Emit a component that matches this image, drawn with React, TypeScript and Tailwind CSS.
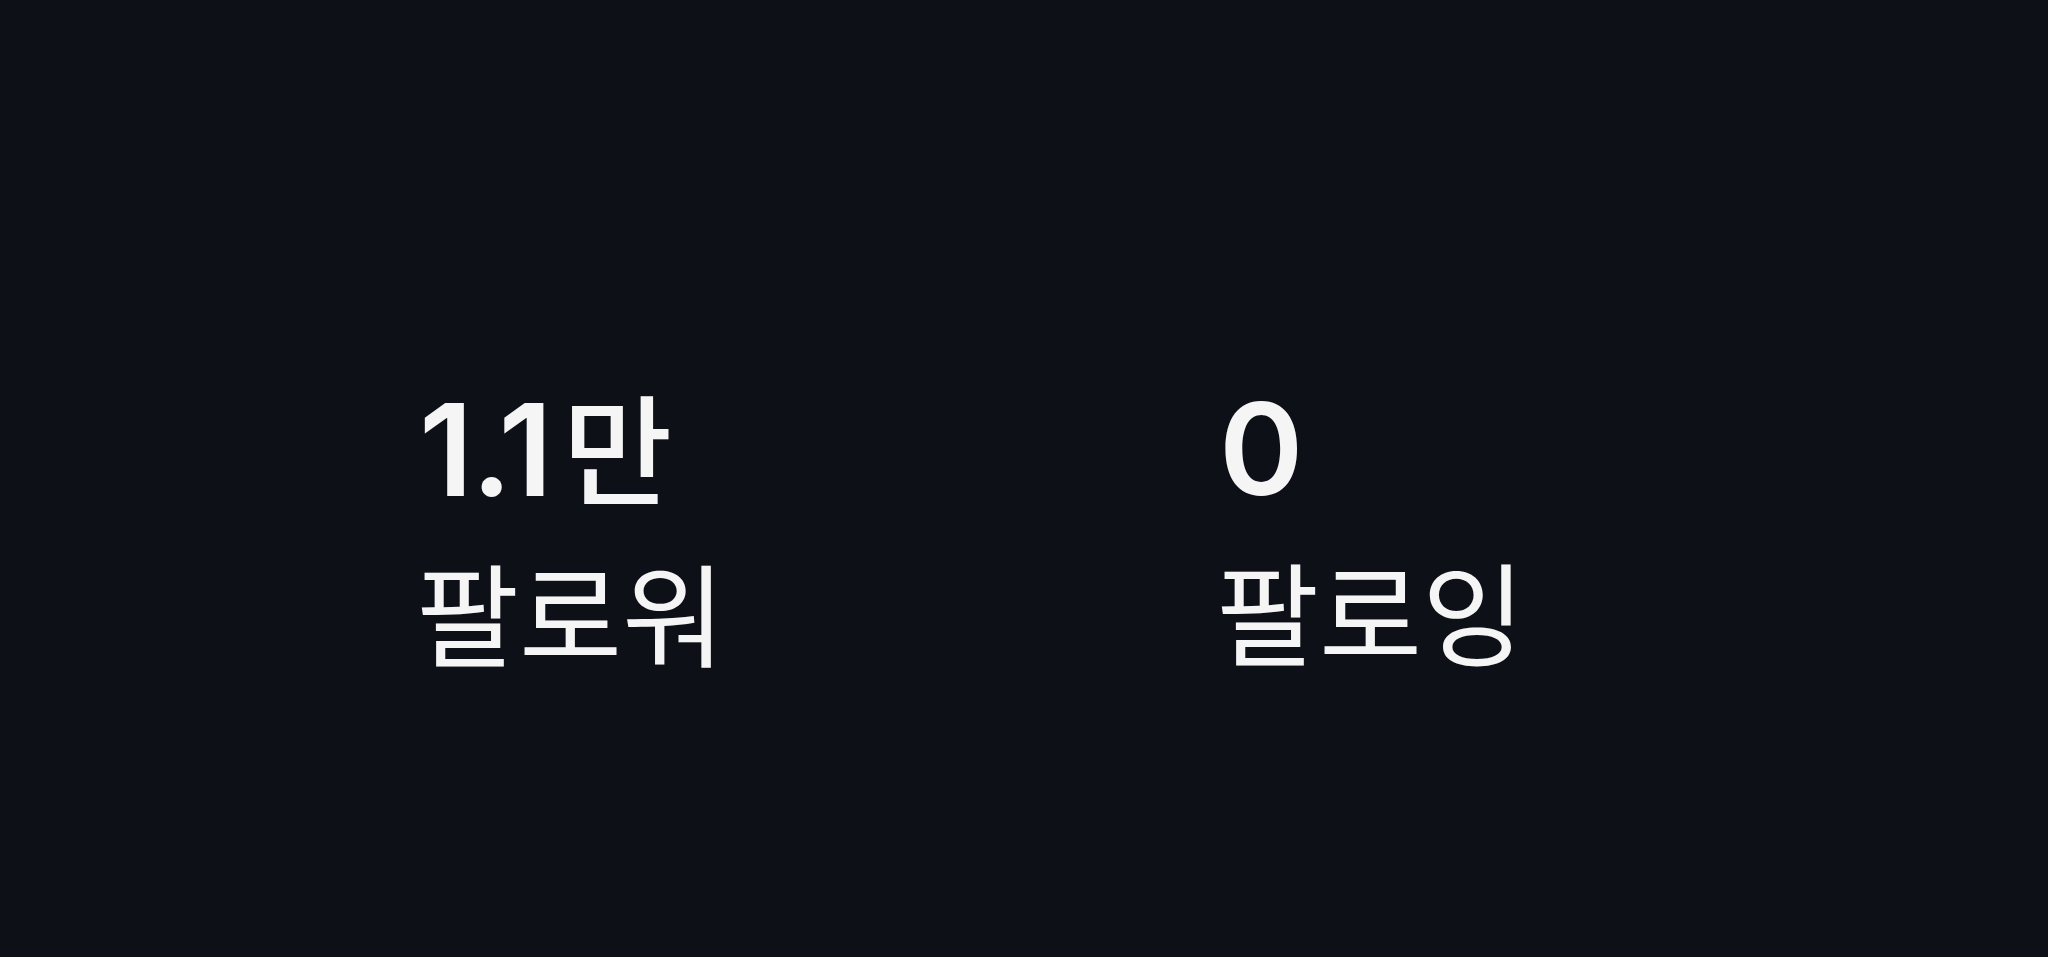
import React from 'react';

type Stat = { count: string; unit?: string; label: string };

const stats: Stat[] = [
  { count: '1.1', unit: '만', label: '팔로워' },
  { count: '0', label: '팔로잉' },
];

const StatBlock: React.FC<{ stat: Stat }> = ({ stat }) => (
  <div className="flex w-[800px] flex-col">
    <span className="font-['Inter','Noto_Sans_CJK_KR',sans-serif] text-[128px] font-semibold leading-none tracking-[-2px] text-[#f5f5f5]">
      {stat.count}
      {stat.unit && (
        <span className="ml-[12px] font-['Noto_Sans_CJK_KR',sans-serif] text-[119px] font-medium tracking-normal">
          {stat.unit}
        </span>
      )}
    </span>
    <span className="-ml-[3px] mt-[40px] text-[112px] font-normal leading-none text-[#f5f5f5]">
      {stat.label}
    </span>
  </div>
);

export default function App() {
  return (
    <div className="min-h-screen bg-[#0d1117] pl-[419px] pt-[385px] font-['Noto_Sans_CJK_KR','Noto_Sans',sans-serif]">
      <div className="flex">
        {stats.map((s) => (
          <StatBlock key={s.label} stat={s} />
        ))}
      </div>
    </div>
  );
}
